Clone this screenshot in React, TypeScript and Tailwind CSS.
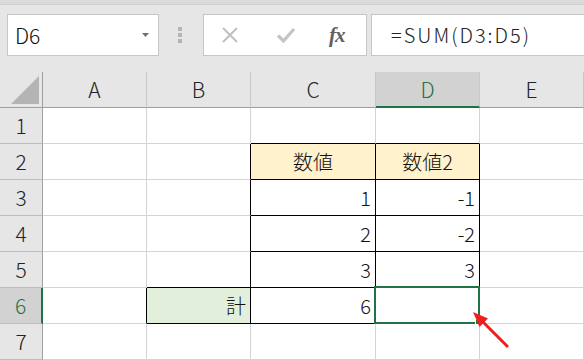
import React from "react";

const COLS = ["A", "B", "C", "D", "E"];
const WIDTHS = ["w-[104px]", "w-[104px]", "w-[125px]", "w-[104px]", "w-[104px]"];

type Cell = { text?: string; align?: "right" | "center"; bg?: string; r?: boolean; b?: boolean };

// black edges of the table, by "row-col"
const cells: Record<string, Cell> = {
  "1-2": { b: true },
  "1-3": { b: true },
  "2-1": { r: true },
  "2-2": { text: "数値", align: "center", bg: "bg-[#fff2cc]", r: true, b: true },
  "2-3": { text: "数値2", align: "center", bg: "bg-[#fff2cc]", r: true, b: true },
  "3-1": { r: true },
  "3-2": { text: "1", align: "right", r: true, b: true },
  "3-3": { text: "-1", align: "right", r: true, b: true },
  "4-1": { r: true },
  "4-2": { text: "2", align: "right", r: true, b: true },
  "4-3": { text: "-2", align: "right", r: true, b: true },
  "5-1": { r: true, b: true },
  "5-2": { text: "3", align: "right", r: true, b: true },
  "5-3": { text: "3", align: "right", r: true, b: true },
  "6-0": { r: true },
  "6-1": { text: "計", align: "right", bg: "bg-[#e2efda]", r: true, b: true },
  "6-2": { text: "6", align: "right", r: true, b: true },
  "6-3": { r: true, b: true },
};

function GridCell({ row, col }: { row: number; col: number }) {
  const c = cells[`${row}-${col}`] ?? {};
  const rc = c.r ? "border-r-black" : "border-r-[#d4d4d4]";
  const bc = c.b ? "border-b-black" : "border-b-[#d4d4d4]";
  const al = c.align === "center" ? "justify-center" : "justify-end pr-[4px]";
  const selected = row === 6 && col === 3;
  return (
    <div className={`relative flex h-[36px] shrink-0 items-center border-r border-b ${rc} ${bc} ${c.bg ?? "bg-white"} ${al} ${WIDTHS[col]}`}>
      {c.text && <span className="text-[20px] font-light leading-none text-[#111]">{c.text}</span>}
      {selected && (
        <>
          <div className="absolute -left-[2px] -top-[2px] -right-[1px] -bottom-[1px] border-2 border-[#217346]" />
          <div className="absolute -right-[3px] -bottom-[3px] h-[7px] w-[7px] border border-white bg-[#217346]" />
        </>
      )}
    </div>
  );
}

function Toolbar() {
  return (
    <div>
      <div className="h-[5px] border-b border-[#d0d0d0] bg-[#dadada]" />
      <div className="flex items-start pt-[9px]">
        <div className="ml-[7px] flex h-[42px] w-[152px] items-center justify-between border border-[#c6c6c6] bg-white pl-[7px] pr-[9px]">
          <span className="text-[21px] font-light leading-none text-[#111]">D6</span>
          <svg width="7" height="4" viewBox="0 0 7 4">
            <path d="M0 0h7L3.5 4z" fill="#707070" />
          </svg>
        </div>
        <div className="ml-[19px] flex h-[42px] flex-col justify-center gap-[2px]">
          <div className="h-[4px] w-[4px] bg-[#b4b4b4]" />
          <div className="h-[4px] w-[4px] bg-[#b4b4b4]" />
          <div className="h-[4px] w-[4px] bg-[#b4b4b4]" />
        </div>
        <div className="ml-[21px] flex h-[42px] w-[164px] items-center border border-[#c6c6c6] bg-white">
          <svg className="ml-[17px]" width="18" height="16" viewBox="0 0 18 16">
            <path d="M2 1L16 15M16 1L2 15" stroke="#c0c0c0" strokeWidth="2" fill="none" />
          </svg>
          <svg className="ml-[37px]" width="20" height="16" viewBox="0 0 20 16">
            <path d="M2 8.5L7.5 14L18 2" stroke="#c4c4c4" strokeWidth="3.2" fill="none" />
          </svg>
          <span className="ml-[33px] font-['Liberation_Serif',serif] text-[21px] font-bold italic leading-none tracking-[-1px] text-[#606060]">
            fx
          </span>
        </div>
        <div className="ml-[4px] flex h-[42px] flex-1 items-center border border-r-0 border-[#c6c6c6] bg-white pl-[19px]">
          <span className="text-[20px] font-light leading-none tracking-[2px] text-[#222]">=SUM(D3:D5)</span>
        </div>
      </div>
    </div>
  );
}

export default function App() {
  return (
    <div className="relative h-[360px] w-[584px] overflow-hidden bg-[#e6e6e6] font-['Noto_Sans_CJK_JP','Liberation_Sans',sans-serif]">
      <div className="h-[72px]">
        <Toolbar />
      </div>

      {/* column headers */}
      <div className="flex h-[36px]">
        <div className="flex h-[36px] w-[43px] shrink-0 items-end justify-end border-r border-b border-[#9e9e9e] pb-[3px] pr-[3px]">
          <svg width="28" height="28" viewBox="0 0 28 28">
            <path d="M28 0V28H0z" fill="#b4b4b4" />
          </svg>
        </div>
        {COLS.map((c, i) => {
          const sel = c === "D";
          return (
            <div
              key={c}
              className={`flex h-[36px] shrink-0 items-center justify-center border-r border-r-[#c8c8c8] ${WIDTHS[i]} ${
                sel ? "border-b-2 border-b-[#217346] bg-[#d2d2d2] text-[#217346]" : "border-b border-b-[#9e9e9e] text-[#222]"
              }`}
            >
              <span className="text-[21px] font-light leading-none">{c}</span>
            </div>
          );
        })}
      </div>

      {/* rows */}
      {[1, 2, 3, 4, 5, 6, 7].map((r) => {
        const sel = r === 6;
        return (
          <div key={r} className="flex h-[36px]">
            <div
              className={`flex h-[36px] w-[43px] shrink-0 items-center justify-center border-b border-b-[#bdbdbd] ${
                sel ? "border-r-2 border-r-[#217346] bg-[#d2d2d2] text-[#217346]" : "border-r border-r-[#9e9e9e] text-[#222]"
              }`}
            >
              <span className="text-[21px] font-light leading-none">{r}</span>
            </div>
            {COLS.map((c, i) => (
              <GridCell key={c} row={r} col={i} />
            ))}
          </div>
        );
      })}

      {/* annotation arrow */}
      <svg className="pointer-events-none absolute left-0 top-0" width="584" height="360" viewBox="0 0 584 360">
        <line x1="508" y1="347" x2="482" y2="321" stroke="#f01e1e" strokeWidth="3" />
        <polygon points="473,312 488,318.5 479.5,327" fill="#f01e1e" />
      </svg>
    </div>
  );
}
